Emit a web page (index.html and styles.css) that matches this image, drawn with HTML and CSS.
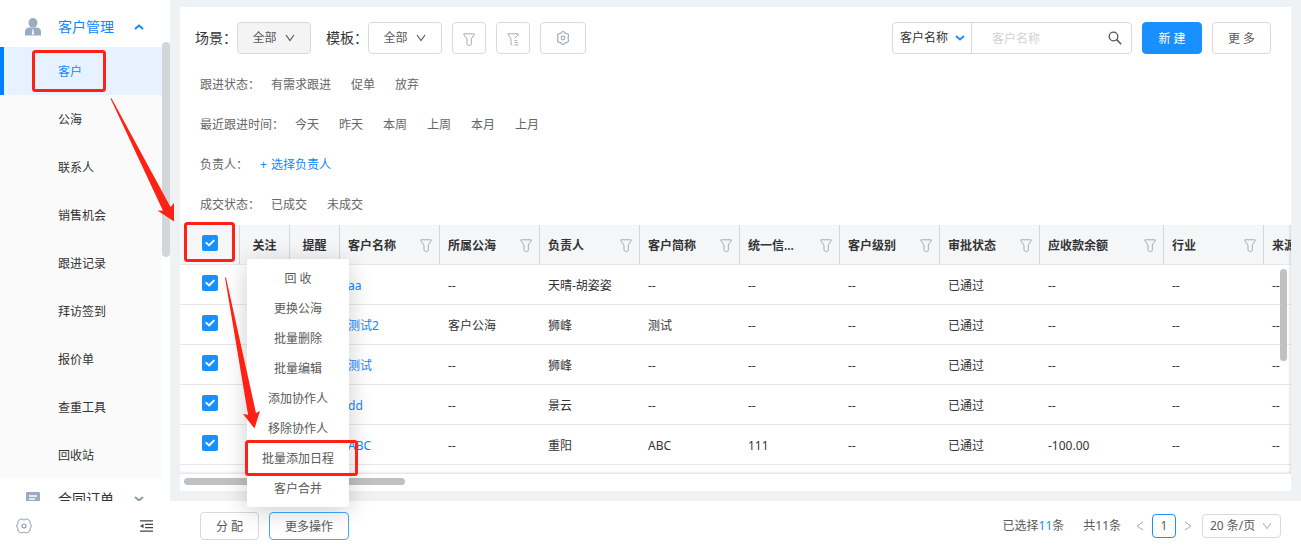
FILE: index.html
```html
<!DOCTYPE html>
<html lang="zh-CN">
<head>
<meta charset="utf-8">
<title>客户管理</title>
<link rel="stylesheet" href="styles.css">
</head>
<body>
<svg class="defs" aria-hidden="true">
  <symbol id="i-filter" viewBox="0 0 12 13"><path d="M.8.8h10.400v.9L8.300 6v5.500l-1 .9H5.500L4 11.500V6L.8 1.700z" fill="none" stroke="#a3acb9" stroke-linejoin="round"/></symbol>
  <symbol id="i-down" viewBox="0 0 12 12"><path d="M2 3l4 5.500L10 3" fill="none" stroke="currentColor" stroke-width="1.200"/></symbol>
  <symbol id="i-chev" viewBox="0 0 12 12"><path d="M2 4l4 3.500L10 4" fill="none" stroke="currentColor" stroke-width="2"/></symbol>
  <symbol id="i-gear" viewBox="0 0 16 16"><path d="M4.500 1.200h1.800l1.700.9 1.700-.9h1.800l1.700 1 .9 1.700.1 1.800L15.500 8l-1.300 2.300-.1 1.800-.9 1.700-1.700 1H9.700L8 13.900l-1.700.9H4.500l-1.700-1-.9-1.700-.1-1.800L.5 8l1.300-2.300.1-1.800.9-1.700z" fill="none" stroke="currentColor" stroke-linejoin="round"/><circle cx="8" cy="8" r="2" fill="none" stroke="currentColor" stroke-width="1.200"/></symbol>
  <symbol id="i-hex" viewBox="0 0 14 14"><path d="M5.500 1.200L7 .5l1.500.7.9 1.200 1.500.1 1.500 1V5.300L12 7l.4 1.700v1.800l-1.500 1-1.500.1-.9 1.200-1.500.7-1.500-.7-.9-1.200-1.500-.1-1.500-1V8.700L2 7l-.4-1.700V3.500l1.500-1 1.500-.1z" fill="none" stroke="currentColor" stroke-width="1.200" stroke-linejoin="round"/><circle cx="7" cy="7" r="1.800" fill="none" stroke="currentColor" stroke-width="1.200"/></symbol>
</svg>

<div class="app">
  <aside class="sidebar">
    <nav class="menu">
      <button class="group open" type="button">
        <svg width="16" height="18" viewBox="0 0 16 18"><ellipse cx="8" cy="4.800" rx="4.500" ry="4.800" fill="#9cabbf"/><path d="M0 17.500v-3.500Q0 9.500 4.500 9.500h7Q16 9.500 16 14v3.500z" fill="#9cabbf"/><path d="M7 11.500h2l-.5 1 .7 4h-2.400l.7-4z" fill="#fff"/></svg>
        <span>客户管理</span>
        <svg class="flip" width="12" height="12"><use href="#i-chev"/></svg>
      </button>
      <ul class="submenu">
        <li><a class="active" href="#">客户</a></li>
        <li><a href="#">公海</a></li>
        <li><a href="#">联系人</a></li>
        <li><a href="#">销售机会</a></li>
        <li><a href="#">跟进记录</a></li>
        <li><a href="#">拜访签到</a></li>
        <li><a href="#">报价单</a></li>
        <li><a href="#">查重工具</a></li>
        <li><a href="#">回收站</a></li>
      </ul>
      <button class="group" type="button">
        <svg width="16" height="16" viewBox="0 0 16 16"><path d="M2 1h12q1 0 1 1v10q0 1-1 1H9l-2 2-2-2H2q-1 0-1-1V2q0-1 1-1z" fill="#9cabbf"/><path d="M4 5h8M4 8h6" stroke="#fff" stroke-width="1.500"/></svg>
        <span>合同订单</span>
        <svg width="12" height="12"><use href="#i-chev"/></svg>
      </button>
    </nav>
    <div class="side-scroll"></div>
  </aside>

  <main class="main">
    <section class="card">
      <div class="toolbar">
        <div class="pick"><span class="label">场景：</span><button class="btn drop pressed" type="button">全部<svg width="12" height="12"><use href="#i-down"/></svg></button></div>
        <div class="pick"><span class="label">模板：</span><button class="btn drop" type="button">全部<svg width="12" height="12"><use href="#i-down"/></svg></button></div>
        <div class="tools">
          <button class="btn tool" type="button" aria-label="筛选"><svg width="12" height="13"><use href="#i-filter"/></svg></button>
          <button class="btn tool" type="button" aria-label="高级筛选"><svg width="12" height="13" viewBox="0 0 12 13"><path d="M11 3V.8H.8L4 6v5.500l1.500.9M10.600 2.200L7.800 5.500M7.500 7.500h2.500M7.500 9.700h3.500M7.500 12h4" fill="none" stroke="#a3acb9"/></svg></button>
          <button class="btn tool wide" type="button" aria-label="设置"><svg width="14" height="14"><use href="#i-hex"/></svg></button>
        </div>
        <form class="search">
          <span class="search-type">
            <select aria-label="搜索字段"><option>客户名称</option></select>
            <svg width="12" height="12"><use href="#i-chev"/></svg>
          </span>
          <input type="text" placeholder="客户名称" aria-label="客户名称">
          <button type="button" aria-label="搜索"><svg width="14" height="14" viewBox="0 0 14 14"><circle cx="5.500" cy="5.500" r="4.300" fill="none" stroke="#555" stroke-width="1.300"/><path d="M8.600 8.600l4.600 4.600" stroke="#555" stroke-width="1.500"/></svg></button>
        </form>
        <button class="btn primary" type="button">新 建</button>
        <button class="btn more" type="button">更 多</button>
      </div>

      <div class="filters">
        <div class="filter"><span>跟进状态：</span><a href="#">有需求跟进</a><a href="#">促单</a><a href="#">放弃</a></div>
        <div class="filter"><span>最近跟进时间：</span><a href="#">今天</a><a href="#">昨天</a><a href="#">本周</a><a href="#">上周</a><a href="#">本月</a><a href="#">上月</a></div>
        <div class="filter"><span>负责人：</span><a class="add" href="#"><i>+</i>选择负责人</a></div>
        <div class="filter"><span>成交状态：</span><a href="#">已成交</a><a href="#">未成交</a></div>
      </div>

      <div class="grid-view">
        <table>
          <colgroup><col class="c-check"><col class="c-small"><col class="c-small"><col class="c-std" span="7"><col class="c-amount"><col class="c-std" span="2"></colgroup>
          <thead>
            <tr>
              <th class="check"><input type="checkbox" checked aria-label="全选"></th>
              <th class="mid">关注</th>
              <th class="mid">提醒</th>
              <th><div class="head">客户名称<svg width="12" height="13"><use href="#i-filter"/></svg></div></th>
              <th><div class="head">所属公海<svg width="12" height="13"><use href="#i-filter"/></svg></div></th>
              <th><div class="head">负责人<svg width="12" height="13"><use href="#i-filter"/></svg></div></th>
              <th><div class="head">客户简称<svg width="12" height="13"><use href="#i-filter"/></svg></div></th>
              <th><div class="head">统一信...<svg width="12" height="13"><use href="#i-filter"/></svg></div></th>
              <th><div class="head">客户级别<svg width="12" height="13"><use href="#i-filter"/></svg></div></th>
              <th><div class="head">审批状态<svg width="12" height="13"><use href="#i-filter"/></svg></div></th>
              <th><div class="head">应收款余额<svg width="12" height="13"><use href="#i-filter"/></svg></div></th>
              <th><div class="head">行业<svg width="12" height="13"><use href="#i-filter"/></svg></div></th>
              <th><div class="head">来源</div></th>
            </tr>
          </thead>
          <tbody>
            <tr><td class="check"><input type="checkbox" checked aria-label="选择 aa"></td><td></td><td></td><td><a href="#">aa</a></td><td>--</td><td>天晴-胡姿姿</td><td>--</td><td>--</td><td>--</td><td>已通过</td><td>--</td><td>--</td><td>--</td></tr>
            <tr><td class="check"><input type="checkbox" checked aria-label="选择 测试2"></td><td></td><td></td><td><a href="#">测试2</a></td><td>客户公海</td><td>狮峰</td><td>测试</td><td>--</td><td>--</td><td>已通过</td><td>--</td><td>--</td><td>--</td></tr>
            <tr><td class="check"><input type="checkbox" checked aria-label="选择 测试"></td><td></td><td></td><td><a href="#">测试</a></td><td>--</td><td>狮峰</td><td>--</td><td>--</td><td>--</td><td>已通过</td><td>--</td><td>--</td><td>--</td></tr>
            <tr><td class="check"><input type="checkbox" checked aria-label="选择 dd"></td><td></td><td></td><td><a href="#">dd</a></td><td>--</td><td>景云</td><td>--</td><td>--</td><td>--</td><td>已通过</td><td>--</td><td>--</td><td>--</td></tr>
            <tr><td class="check"><input type="checkbox" checked aria-label="选择 ABC"></td><td></td><td></td><td><a href="#">ABC</a></td><td>--</td><td>重阳</td><td>ABC</td><td>111</td><td>--</td><td>已通过</td><td>-100.00</td><td>--</td><td>--</td></tr>
          </tbody>
        </table>
        <div class="edge"></div>
        <div class="v-scroll"></div>
      </div>
      <div class="h-track"><div class="h-scroll"></div></div>
    </section>
  </main>

  <footer class="side-foot">
    <button type="button" aria-label="设置"><svg width="16" height="16"><use href="#i-gear"/></svg></button>
    <button class="fold" type="button" aria-label="收起菜单"><svg width="13" height="12" viewBox="0 0 13 12"><path d="M0 .8h13M5 4.300h8M5 7.600h8M0 11.200h13" stroke="#444" stroke-width="1.300"/><path d="M0 6l3.500-2.300v4.600z" fill="#444"/></svg></button>
  </footer>
  <footer class="foot">
    <button class="btn small" type="button">分 配</button>
    <div class="bulk">
      <button class="btn small focus" type="button">更多操作</button>
      <ul class="popup">
        <li><button type="button">回 收</button></li>
        <li><button type="button">更换公海</button></li>
        <li><button type="button">批量删除</button></li>
        <li><button type="button">批量编辑</button></li>
        <li><button type="button">添加协作人</button></li>
        <li><button type="button">移除协作人</button></li>
        <li><button type="button">批量添加日程</button></li>
        <li><button type="button">客户合并</button></li>
      </ul>
    </div>
    <div class="pager">
      <span>已选择<b>11</b>条</span>
      <span>共11条</span>
      <div class="pages">
        <button type="button" aria-label="上一页"><svg width="8" height="10" viewBox="0 0 8 10"><path d="M7 1L1 5l6 4" fill="none" stroke="#aaa"/></svg></button>
        <button class="current" type="button">1</button>
        <button type="button" aria-label="下一页"><svg width="8" height="10" viewBox="0 0 8 10"><path d="M1 1l6 4-6 4" fill="none" stroke="#aaa"/></svg></button>
      </div>
      <span class="size">
        <select aria-label="每页条数"><option>20 条/页</option></select>
        <svg width="12" height="12"><use href="#i-down"/></svg>
      </span>
    </div>
  </footer>
</div>

<svg class="marks" width="400" height="500" viewBox="0 0 400 500" aria-hidden="true">
  <g fill="none" stroke="#ff2113" stroke-width="3">
    <rect x="33.500" y="51.500" width="71" height="39" rx="2"/>
    <rect x="185.500" y="223.500" width="48" height="37" rx="2"/>
    <rect x="246.500" y="441.500" width="110" height="33" rx="2"/>
  </g>
  <g fill="#ff2113">
    <path d="M110.500 98.500l1-.2L170.500 207l3.500-4v18.500L157.500 210.500l5.500.3z"/>
    <path d="M225 277.500h1L256 413l4-2-5.500 17.500L243 414l5 .8z"/>
  </g>
</svg>
</body>
</html>
```

FILE: styles.css
```css
* { box-sizing: border-box; }

body {
  margin: 0;
  font: 12px/20px "Noto Sans", "Noto Sans CJK SC", sans-serif;
  color: #333;
  overflow: hidden;
}

button, input, select { font: inherit; color: inherit; margin: 0; padding: 0; border: 0; background: none; outline: 0; }
select { appearance: none; }
svg { flex: none; display: block; }
ul { margin: 0; padding: 0; list-style: none; }
a { color: inherit; text-decoration: none; }
.defs { position: absolute; width: 0; height: 0; }
.flip { transform: rotate(180deg); }

.app {
  display: grid;
  grid-template-columns: 170px minmax(0, 1fr);
  grid-template-rows: minmax(0, 1fr) 50px;
  height: 100vh;
}

/* Sidebar */
.sidebar { position: relative; overflow: hidden; background: #fff; }
.menu { margin-right: 8px; }
.group {
  display: flex;
  align-items: center;
  width: 100%;
  height: 47px;
  padding: 7px 17px 0 25px;
  font-size: 14px;
  text-align: left;
  color: #333;
}
.group span { flex: 1; padding-left: 17px; }
.group svg:last-child { color: #8e9bab; }
.group.open, .group.open svg:last-child { color: #0e87ff; }
.group:last-child { padding-top: 0; height: 40px; }
.submenu { background: #fafafa; }
.submenu a { display: block; padding: 15px 0 13px 58px; }
.submenu .active { padding-left: 54px; border-left: 4px solid #0080ff; background: #e6f2ff; color: #0e87ff; }
.side-scroll { position: absolute; top: 42px; right: 0; width: 8px; height: 215px; border-radius: 4px; background: #d3d6d9; }

/* Content card */
.main { display: flex; padding: 7px 10px 10px; background: #eef2f5; }
.card { flex: 1; min-width: 0; display: flex; flex-direction: column; background: #fff; }

.btn {
  height: 32px;
  border: 1px solid #d9d9d9;
  border-radius: 4px;
  background: #fff;
  color: #595959;
}
.toolbar { display: flex; gap: 10px; padding: 15px 20px 10px 15px; }
.pick { display: flex; align-items: center; margin-right: 5px; }
.tools { display: flex; gap: 10px; margin-left: -5px; }
.label { font-size: 14px; }
.drop { display: flex; align-items: center; justify-content: center; gap: 7px; width: 74px; }
.pressed { background: #f4f4f4; }
.tool { display: flex; align-items: center; justify-content: center; width: 34px; padding-top: 3px; color: #a3acb9; }
.wide { width: 46px; padding-top: 0; }
.primary { width: 60px; padding-top: 2px; border-color: #1890ff; background: #1890ff; color: #fff; }
.more { width: 59px; padding-top: 2px; }

.search { display: flex; width: 240px; height: 32px; margin-left: auto; border: 1px solid #d9d9d9; border-radius: 4px; }
.search-type { display: flex; align-items: center; gap: 6px; width: 79px; padding-left: 7px; border-right: 1px solid #d9d9d9; color: #1890ff; }
.search-type select { width: 48px; color: #333; }
.search input { flex: 1; min-width: 0; padding: 2px 0 0 20px; }
.search input::placeholder { color: #d2d2d2; opacity: 1; }
.search button { width: 32px; display: flex; align-items: center; justify-content: center; }

.filters { padding: 0 20px 1px; color: #666; }
.filter { display: flex; gap: 20px; padding: 11px 0 9px; }
.filter span { margin-right: -9px; }
.filter .add { color: #0e87ff; }
.filter i { font-style: normal; margin: 0 4px 0 1px; }

/* Data table */
.grid-view { position: relative; flex: 1; min-height: 0; overflow: hidden; }
table { width: 1184px; table-layout: fixed; border-collapse: separate; border-spacing: 0; }
.c-check { width: 60px; }
.c-small { width: 50px; }
.c-std { width: 100px; }
.c-amount { width: 124px; }
th, td { height: 40px; padding: 2px 8px 0; border-bottom: 1px solid #e6e8ee; text-align: left; white-space: nowrap; }
th { padding-right: 7px; border-right: 1px solid #d5d8dc; background: #f5f6f8; font-weight: 600; }
td a { color: #0e87ff; }
th.mid { padding-right: 8px; text-align: center; }
.head { display: flex; align-items: center; justify-content: space-between; }
th.check, td.check { padding: 0 0 4px; text-align: center; }
th.check { padding-left: 1px; }

input[type="checkbox"] {
  appearance: none;
  display: inline-block;
  position: relative;
  width: 16px;
  height: 16px;
  vertical-align: middle;
  border-radius: 2px;
  background: #1890ff;
}
input[type="checkbox"]::after {
  content: "";
  position: absolute;
  inset: 4px 3px;
  background: #fff;
  clip-path: polygon(0 46%, 14% 30%, 40% 58%, 86% 2%, 100% 18%, 42% 92%);
}
.edge { position: absolute; inset: 0; box-shadow: inset -3px -3px 3px -2px rgba(0, 0, 0, .15); pointer-events: none; }
.v-scroll { position: absolute; top: 44px; right: 4px; width: 7px; height: 92px; border-radius: 4px; background: #c1c1c1; }
.h-track { padding: 4px 4px 6px; }
.h-scroll { width: 20%; height: 7px; border-radius: 4px; background: #c1c1c1; }

/* Footer */
.side-foot { display: flex; align-items: center; justify-content: space-between; padding: 0 17px 0 16px; color: #8e9bab; background: #fff; }
.foot { display: flex; align-items: center; gap: 10px; padding: 0 20px 0 30px; background: #fff; color: #595959; }
.small { height: 28px; width: 59px; padding-top: 2px; }
.bulk { position: relative; display: flex; }
.focus { width: 80px; border-color: #40a9ff; }
.popup {
  position: absolute;
  right: 0;
  bottom: calc(100% + 5px);
  width: 102px;
  padding: 4px 0;
  border-radius: 2px;
  background: #fff;
  box-shadow: 0 4px 24px rgba(0, 0, 0, .2);
}
.popup button { display: block; width: 100%; height: 30px; padding-top: 2px; white-space: nowrap; }
.pager { display: flex; align-items: center; gap: 19px; margin-left: auto; }
.pager b { font-weight: 400; color: #1890ff; }
.pages { display: flex; align-items: center; gap: 8px; margin-right: -9px; margin-left: -4px; }
.current { width: 24px; height: 24px; border: 1px solid #1890ff; border-radius: 4px; }
.size { display: flex; align-items: center; width: 79px; height: 24px; padding: 0 7px; border: 1px solid #d9d9d9; border-radius: 4px; color: #bbb; }
.size select { flex: 1; min-width: 0; color: #595959; }

.marks { position: absolute; left: 0; top: 0; pointer-events: none; }
```
